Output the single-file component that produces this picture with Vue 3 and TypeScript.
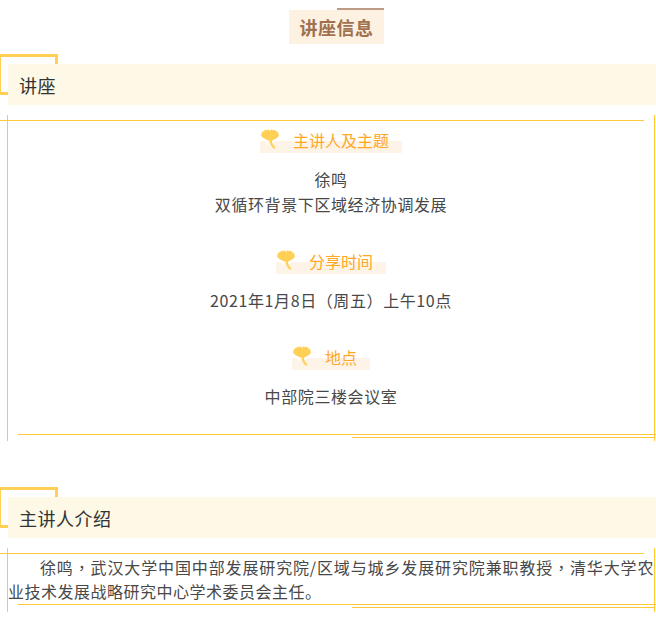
<script setup lang="ts">
interface Block { label: string; lines: string[] }
interface Seg { text: string; punct: boolean }
const blocks: Block[] = [
  { label: '主讲人及主题', lines: ['徐鸣', '双循环背景下区域经济协调发展'] },
  { label: '分享时间', lines: ['2021年1月8日（周五）上午10点'] },
  { label: '地点', lines: ['中部院三楼会议室'] },
]
const introFirst = '徐鸣，武汉大学中国中部发展研究院/区域与城乡发展研究院兼职教授，清华大学农'
const introSecond = '业技术发展战略研究中心学术委员会主任。'

function segments(text: string): Seg[] {
  return text
    .split(/([，（）])/)
    .filter((t) => t.length > 0)
    .map((t) => ({ text: t, punct: /^[，（）]$/.test(t) }))
}
const introSegments: Seg[] = [...segments(introFirst), ...segments(introSecond)]
</script>

<template>
  <div class="page">
    <div class="title-row">
      <div class="title">讲座信息</div>
    </div>

    <section class="heading">
      <span class="bracket"></span>
      <h2 class="band">讲座</h2>
    </section>
    <div class="card card-info">
      <span class="line-top"></span>
      <span class="line-left"></span>
      <span class="line-right"></span>
      <span class="line-bottom"></span>
      <span class="line-bottom2"></span>
      <div v-for="b in blocks" :key="b.label" class="block">
        <div class="label">
          <svg class="leaf" viewBox="0 0 18 20" aria-hidden="true">
            <path d="M9 2 L10.500 0.300 L12 1.300 L14 0.800 L15 2.200 L16.500 2.600 C17.500 4 18 6 17.800 7 C15.500 9.500 13 11 10.800 11.800 C10.800 14 12.500 17 14.500 18.600 L13 20 C10.500 18 8.800 15 8.700 11.800 C5.500 11 2.500 9.500 0.200 7 C0 6 0.500 4 1.500 2.600 L3 2.200 L4 0.800 L6 1.300 L7.500 0.300 Z" fill="#ffcf56" />
            <path d="M4 11.500 C5.500 12.500 6.500 14 7 15.500 M14.200 11 C13 12 12.300 12.800 11.800 13.800" fill="none" stroke="#fff" stroke-width="1.200" />
          </svg>
          <span>{{ b.label }}</span>
        </div>
        <p v-for="l in b.lines" :key="l" class="line">
          <span v-for="(s, i) in segments(l)" :key="i" :class="{ punct: s.punct }">{{ s.text }}</span>
        </p>
      </div>
    </div>

    <section class="heading heading-2">
      <span class="bracket"></span>
      <h2 class="band">主讲人介绍</h2>
    </section>
    <div class="card card-intro">
      <span class="line-top"></span>
      <span class="line-left"></span>
      <span class="line-right"></span>
      <span class="line-bottom"></span>
      <span class="line-bottom2"></span>
      <p class="intro"><span v-for="(s, i) in introSegments" :key="i" :class="{ punct: s.punct }">{{ s.text }}</span></p>
    </div>
  </div>
</template>

<style scoped>
.page {
  width: 656px;
  height: 619px;
  overflow: hidden;
  background: #fff;
  font-family: "Noto Sans CJK SC", "Noto Sans", sans-serif;
  color: #484848;
}
.punct { font-family: "Noto Sans CJK TC", sans-serif; }
.title-row {
  display: flex;
  justify-content: center;
  padding: 8px 0 0 17px;
}
.title {
  position: relative;
  width: 95px;
  margin-top: 2px;
  height: 34px;
  line-height: 34px;
  text-align: center;
  background: #fdf1e1;
  color: #a0704f;
  font-size: 18px;
  font-weight: 700;
  letter-spacing: 0.5px;
}
.title::before {
  content: "";
  position: absolute;
  right: 0;
  top: -2px;
  width: 47px;
  height: 2px;
  background: #bd9a84;
}
.heading {
  position: relative;
  margin-top: 10px;
  padding: 10px 0 0 8px;
}
.heading-2 { margin-top: 46px; }
.bracket {
  position: absolute;
  left: 0;
  top: 0;
  width: 55px;
  height: 35px;
  border: 3px solid #ffcf56;
  border-left-width: 0;
  box-sizing: content-box;
  box-shadow: inset 1px 0 0 #ffcf56;
}
.band {
  position: relative;
  margin: 0;
  height: 41px;
  line-height: 43px;
  padding-left: 11px;
  background: #fef8e6;
  color: #333;
  font-size: 18px;
  font-weight: 400;
  letter-spacing: 0.5px;
}
.card { position: relative; }
.card-info {
  margin-top: 10px;
  height: 326px;
  box-sizing: border-box;
  padding: 14px 0 0 6px;
}
.card-intro {
  margin-top: 10px;
  height: 64px;
  box-sizing: border-box;
  padding: 7px 2px 0 8px;
}
.line-top, .line-left, .line-right, .line-bottom, .line-bottom2 {
  position: absolute;
  background: #ffc83d;
}
.line-top { left: 0; top: 5px; width: 644px; height: 1px; }
.line-left { left: 7px; top: 0; width: 1px; bottom: 0; }
.line-right { left: 654px; top: 0; width: 1px; bottom: 0; }
.line-bottom { left: 18px; right: 0; bottom: 6px; height: 1px; }
.line-bottom2 { left: 352px; right: 2px; bottom: 3px; height: 1px; }
.card-intro .line-bottom { bottom: 7px; }
.card-intro .line-bottom2 { bottom: 4px; }
.block {
  display: flex;
  flex-direction: column;
  align-items: center;
  margin-bottom: 33px;
}
.label {
  position: relative;
  display: flex;
  align-items: center;
  height: 22px;
  padding: 0 13px 0 33px;
  color: #ffa826;
  font-size: 16px;
  z-index: 0;
}
.label::before {
  content: "";
  position: absolute;
  left: 0;
  right: 0;
  bottom: -2px;
  height: 12px;
  background: #fdf3e6;
  z-index: -1;
}
.leaf {
  position: absolute;
  left: 1px;
  top: 0;
  width: 18px;
  height: 20px;
}
.line {
  margin: 0;
  font-size: 16px;
  line-height: 25px;
  letter-spacing: 0.6px;
}
.label + .line { margin-top: 16px; }
.intro {
  margin: 0;
  font-size: 16px;
  line-height: 24px;
  letter-spacing: 0.5px;
  text-indent: 32px;
  text-align: justify;
}
</style>
